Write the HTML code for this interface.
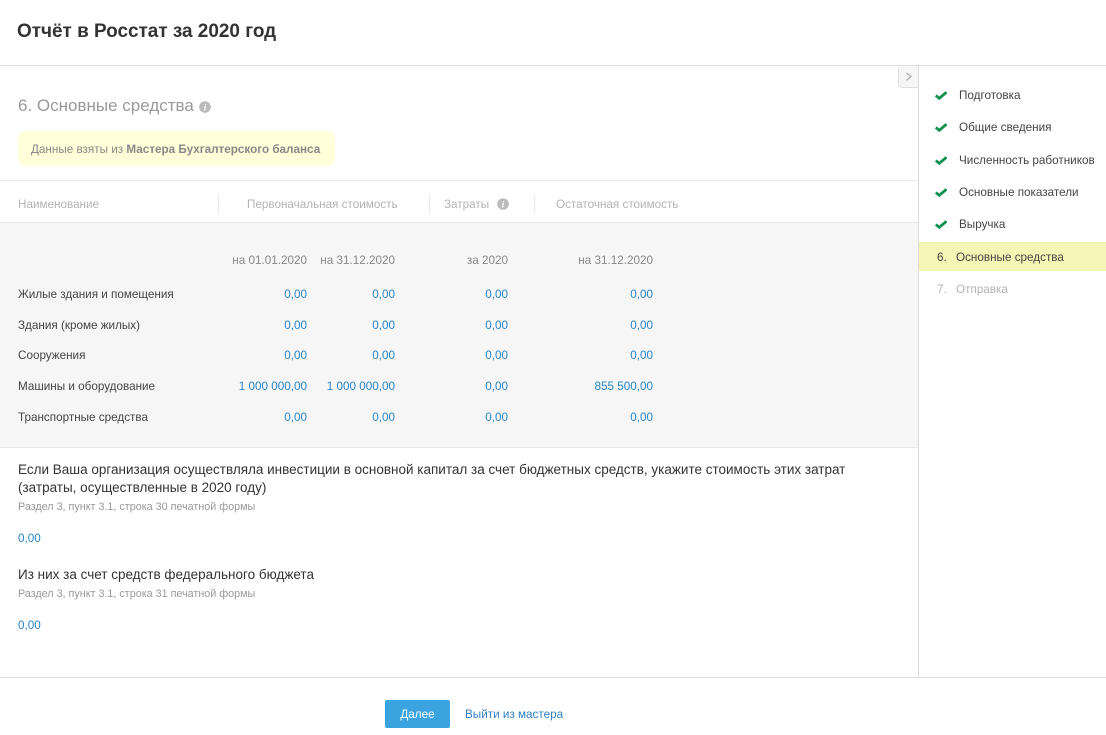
<!DOCTYPE html>
<html lang="ru"><head><meta charset="utf-8"><title>Отчёт в Росстат за 2020 год</title>
<style>
html,body{margin:0;padding:0;background:#fff}
body{width:1106px;height:735px;position:relative;overflow:hidden;font-family:"Liberation Sans",Arial,sans-serif;font-size:11.7px;color:#333}
.a{position:absolute;white-space:nowrap;line-height:16px;margin-top:1px}
.r{position:absolute;white-space:nowrap;line-height:16px;text-align:right;margin-top:1px}
.bx{position:absolute}
.h{color:#b3b3b3}
.d{color:#888}
.b{color:#2a85c8}
.k{color:#444}
.s{color:#999;font-size:10.77px}
.q{font-size:13.5px;line-height:18px;color:#333}
</style></head><body>
<div class="a" style="left:17px;top:19px;font-size:18.95px;font-weight:bold;line-height:24px;color:#333">Отчёт в Росстат за 2020 год</div>
<div class="bx" style="left:0;top:65px;width:1106px;height:1px;background:#ddd"></div>
<div class="bx" style="left:918px;top:66px;width:1px;height:612px;background:#ddd"></div>
<div class="bx" style="left:898px;top:66px;width:20px;height:22px;box-sizing:border-box;background:#f6f6f6;border:1px solid #e0e0e0;border-right:0;border-top:0;border-radius:4px 0 0 4px"></div>
<svg class="bx" style="left:905px;top:70px" width="9" height="13" viewBox="0 0 9 13"><path d="M1.500 3L6 6.500L1.500 10.500" fill="none" stroke="#aaa" stroke-width="1.200"/></svg>

<div class="a" style="left:18px;top:95px;font-size:17px;line-height:20px;color:#999">6. Основные средства</div>
<svg class="bx" style="left:199px;top:101px" width="12" height="12" viewBox="0 0 12 12"><circle cx="6" cy="6" r="5.800" fill="#bbb"/><text x="6" y="9.500" text-anchor="middle" font-family="Liberation Serif" font-style="italic" font-weight="bold" font-size="9" fill="#fff">i</text></svg>

<div class="bx" style="left:18px;top:131px;width:317px;height:35px;background:#ffffd9;border-radius:8px"></div>
<div class="a d" style="left:31px;top:141px">Данные взяты из <b>Мастера Бухгалтерского баланса</b></div>

<div class="bx" style="left:0;top:180px;width:918px;height:1px;background:#e8e8e8"></div>
<div class="a h" style="left:18px;top:196px">Наименование</div>
<div class="bx" style="left:218px;top:195px;width:1px;height:18px;background:#e8e8e8"></div>
<div class="a h" style="left:247px;top:196px">Первоначальная стоимость</div>
<div class="bx" style="left:429px;top:195px;width:1px;height:18px;background:#e8e8e8"></div>
<div class="a h" style="left:444px;top:196px">Затраты</div>
<svg class="bx" style="left:497px;top:198px" width="12" height="12" viewBox="0 0 12 12"><circle cx="6" cy="6" r="5.800" fill="#bbb"/><text x="6" y="9.500" text-anchor="middle" font-family="Liberation Serif" font-style="italic" font-weight="bold" font-size="9" fill="#fff">i</text></svg>
<div class="bx" style="left:534px;top:195px;width:1px;height:18px;background:#e8e8e8"></div>
<div class="a h" style="left:556px;top:196px">Остаточная стоимость</div>

<div class="bx" style="left:0;top:222px;width:918px;height:226px;box-sizing:border-box;background:#f6f6f6;border-top:1px solid #e8e8e8;border-bottom:1px solid #e8e8e8"></div>

<div class="r d" style="right:799px;top:252px">на 01.01.2020</div>
<div class="r d" style="right:711px;top:252px">на 31.12.2020</div>
<div class="r d" style="right:598px;top:252px">за 2020</div>
<div class="r d" style="right:453px;top:252px">на 31.12.2020</div>

<div class="a k" style="left:18px;top:286px">Жилые здания и помещения</div>
<div class="r b" style="right:799px;top:286px">0,00</div><div class="r b" style="right:711px;top:286px">0,00</div><div class="r b" style="right:598px;top:286px">0,00</div><div class="r b" style="right:453px;top:286px">0,00</div>

<div class="a k" style="left:18px;top:317px">Здания (кроме жилых)</div>
<div class="r b" style="right:799px;top:317px">0,00</div><div class="r b" style="right:711px;top:317px">0,00</div><div class="r b" style="right:598px;top:317px">0,00</div><div class="r b" style="right:453px;top:317px">0,00</div>

<div class="a k" style="left:18px;top:347px">Сооружения</div>
<div class="r b" style="right:799px;top:347px">0,00</div><div class="r b" style="right:711px;top:347px">0,00</div><div class="r b" style="right:598px;top:347px">0,00</div><div class="r b" style="right:453px;top:347px">0,00</div>

<div class="a k" style="left:18px;top:378px">Машины и оборудование</div>
<div class="r b" style="right:799px;top:378px">1 000 000,00</div><div class="r b" style="right:711px;top:378px">1 000 000,00</div><div class="r b" style="right:598px;top:378px">0,00</div><div class="r b" style="right:453px;top:378px">855 500,00</div>

<div class="a k" style="left:18px;top:409px">Транспортные средства</div>
<div class="r b" style="right:799px;top:409px">0,00</div><div class="r b" style="right:711px;top:409px">0,00</div><div class="r b" style="right:598px;top:409px">0,00</div><div class="r b" style="right:453px;top:409px">0,00</div>

<div class="a q" style="left:18px;top:460px">Если Ваша организация осуществляла инвестиции в основной капитал за счет бюджетных средств, укажите стоимость этих затрат<br>(затраты, осуществленные в 2020 году)</div>
<div class="a s" style="left:18px;top:498px">Раздел 3, пункт 3.1, строка 30 печатной формы</div>
<div class="a b" style="left:18px;top:530px">0,00</div>
<div class="a q" style="left:18px;top:565px">Из них за счет средств федерального бюджета</div>
<div class="a s" style="left:18px;top:585px">Раздел 3, пункт 3.1, строка 31 печатной формы</div>
<div class="a b" style="left:18px;top:617px">0,00</div>

<svg width="0" height="0" style="position:absolute"><defs><path id="c" d="M0.800 4.500L4.300 7.300L11.500 1.200" fill="none" stroke="#0f9150" stroke-width="2.800"/></defs></svg>
<svg class="bx" style="left:935px;top:91px" width="13" height="10"><use href="#c"/></svg>
<svg class="bx" style="left:935px;top:123px" width="13" height="10"><use href="#c"/></svg>
<svg class="bx" style="left:935px;top:156px" width="13" height="10"><use href="#c"/></svg>
<svg class="bx" style="left:935px;top:188px" width="13" height="10"><use href="#c"/></svg>
<svg class="bx" style="left:935px;top:220px" width="13" height="10"><use href="#c"/></svg>
<div class="a k" style="left:959px;top:87px">Подготовка</div>
<div class="a k" style="left:959px;top:119px">Общие сведения</div>
<div class="a k" style="left:959px;top:152px">Численность работников</div>
<div class="a k" style="left:959px;top:184px">Основные показатели</div>
<div class="a k" style="left:959px;top:216px">Выручка</div>
<div class="bx" style="left:919px;top:242px;width:187px;height:29px;background:#f5f5b5"></div>
<div class="a k" style="left:937px;top:249px">6.</div>
<div class="a k" style="left:956px;top:249px">Основные средства</div>
<div class="a h" style="left:937px;top:281px">7.</div>
<div class="a h" style="left:956px;top:281px">Отправка</div>

<div class="bx" style="left:0;top:677px;width:1106px;height:1px;background:#ddd"></div>
<div class="bx" style="left:385px;top:700px;width:65px;height:28px;background:#3ba3e0;border-radius:2px;color:#fff;text-align:center;line-height:30px">Далее</div>
<div class="a" style="left:465px;top:706px;color:#2f7fc1">Выйти из мастера</div>
</body></html>
